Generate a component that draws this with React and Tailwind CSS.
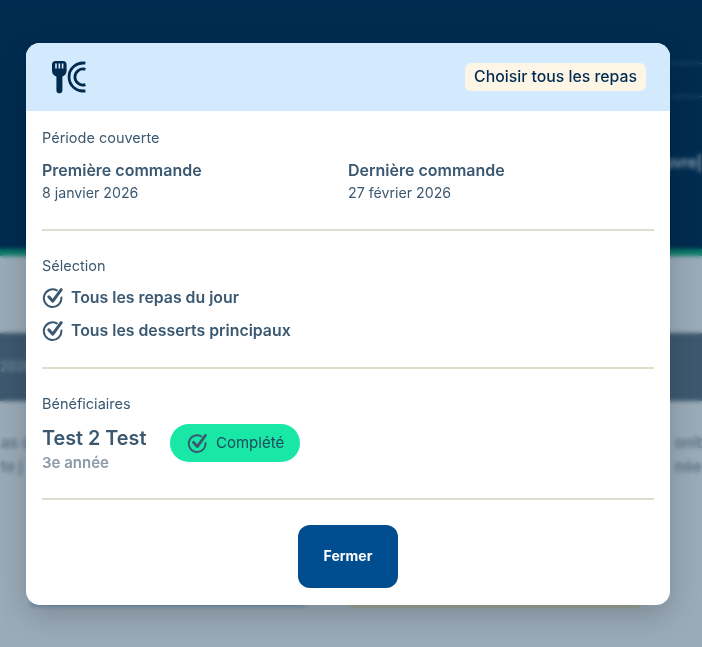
const font = { fontFamily: "Inter, 'Noto Sans', sans-serif" };

function CheckIcon({ className }) {
  return (
    <svg viewBox="0 0 22 22" fill="none" stroke="currentColor" strokeLinecap="round" strokeLinejoin="round" className={className}>
      <path d="M19.4 10.4a8.8 8.8 0 1 1-4.6-7" strokeWidth="2" />
      <path d="M6.8 9.8l4 4.4 8.4-11.6" strokeWidth="3" />
    </svg>
  );
}

function MealIcon() {
  return (
    <svg viewBox="0 0 36 34" className="w-[36px] h-[34px] text-[#012c50]" fill="none">
      <path
        fill="currentColor"
        d="M2 4.6C2 2.2 3.4 1 5.6 1H13C15.2 1 16.6 2.2 16.6 4.6V10.8C16.6 14 14.6 15.8 12.4 16.6V30.4C12.4 34.2 6.4 34.2 6.4 30.4V16.6C4 15.8 2 14 2 10.8Z"
      />
      <path d="M6 3.6V8.6M9.3 3.6V8.6M12.6 3.6V8.6" stroke="#d3e9fe" strokeWidth="1.6" />
      <path d="M35.4 3.2A14 14 0 1 0 35.4 30.8" stroke="currentColor" strokeWidth="2.8" />
      <path d="M35.4 9.4A8 8 0 1 0 35.4 24.6" stroke="currentColor" strokeWidth="2.8" />
    </svg>
  );
}

function Backdrop() {
  return (
    <div className="relative h-[647px] bg-[#9aabb8] overflow-hidden">
      <div className="h-[249px] bg-[#012c50] flex flex-col items-end pt-[63px]">
        <div className="w-[32px] h-px bg-[#3a5c7a]" />
        <div className="w-[32px] h-px bg-[#3a5c7a] mt-[32px]" />
        <p className="text-[15px] font-semibold text-[#8a9fb0] mt-[55px]">ouvre|</p>
      </div>
      <div className="h-[7px] bg-[#0a7a68]" />
      <div className="h-[77px]" />
      <div className="h-[68px] bg-[#3d586f] flex items-center">
        <span className="text-[13px] text-[#8a9fb0]">2026</span>
      </div>
      <div className="flex justify-between pt-[30px] text-[15px] font-semibold leading-[24px] text-[#5f7385]">
        <div className="pl-[1px]">
          <p>as d</p>
          <p>te j</p>
        </div>
        <div>
          <p>onit</p>
          <p>née</p>
        </div>
      </div>
      <div className="flex gap-[44px] pl-[31px] mt-[123px]">
        <div className="w-[275px] h-[4px] bg-[#5f86aa]" />
        <div className="w-[290px] h-[4px] bg-[#a39a62]" />
      </div>
      <div className="absolute inset-0 backdrop-blur-[2px]" />
    </div>
  );
}

export default function App() {
  return (
    <div className="relative h-[647px] w-[702px] overflow-hidden" style={font}>
      <Backdrop />

      <div className="absolute left-[26px] top-[43px] w-[644px] h-[562px] bg-white rounded-[14px] overflow-hidden shadow-[0_10px_30px_rgba(0,0,0,0.2)] flex flex-col">
        <header className="h-[68px] shrink-0 bg-[#d3e9fe] flex items-center justify-between px-[24px]">
          <MealIcon />
          <button className="h-[28px] w-[181px] rounded-[6px] bg-[#fdf5e6] text-[15.8px] font-medium text-[#012c50] whitespace-nowrap">
            Choisir tous les repas
          </button>
        </header>

        <div className="px-[16px] flex-1 flex flex-col text-[#3b5871]">
          <section className="h-[120px] border-b-2 border-[#e0dcce] pt-[18px]">
            <p className="text-[14.5px] leading-[18px]">Période couverte</p>
            <div className="grid grid-cols-2 mt-[13px]">
              <div>
                <p className="text-[16px] leading-[20px] font-semibold">Première commande</p>
                <p className="text-[14.2px] leading-[20px] mt-[3px]">8 janvier 2026</p>
              </div>
              <div>
                <p className="text-[16px] leading-[20px] font-semibold">Dernière commande</p>
                <p className="text-[14.2px] leading-[20px] mt-[3px]">27 février 2026</p>
              </div>
            </div>
          </section>

          <section className="h-[138px] border-b-2 border-[#e0dcce] pt-[26px]">
            <p className="text-[14.5px] leading-[18px]">Sélection</p>
            <div className="flex items-center gap-[7px] mt-[12px] h-[21px]">
              <CheckIcon className="w-[22px] h-[22px]" />
              <span className="text-[15.85px] font-semibold">Tous les repas du jour</span>
            </div>
            <div className="flex items-center gap-[7px] mt-[12px] h-[21px]">
              <CheckIcon className="w-[22px] h-[22px]" />
              <span className="text-[15.85px] font-semibold">Tous les desserts principaux</span>
            </div>
          </section>

          <section className="h-[131px] border-b-2 border-[#e0dcce] pt-[26px]">
            <p className="text-[14.5px] leading-[18px]">Bénéficiaires</p>
            <div className="flex items-start gap-[24px] mt-[11px]">
              <div className="pt-[2px] w-[104px]">
                <p className="text-[19.8px] leading-[24px] font-semibold whitespace-nowrap">Test 2 Test</p>
                <p className="text-[15px] leading-[20px] font-semibold text-[#8c9aa8] mt-[3px]">3e année</p>
              </div>
              <div className="h-[38px] w-[130px] flex items-center gap-[8px] pl-[17px] rounded-[19px] bg-[#18e7a6]">
                <CheckIcon className="w-[21px] h-[21px]" />
                <span className="text-[15px] text-[#1d4a5c]">Complété</span>
              </div>
            </div>
          </section>

          <div className="flex justify-center pt-[25px]">
            <button className="w-[100px] h-[63px] pb-[2px] rounded-[12px] bg-[#004d90] text-white text-[14px] font-bold">Fermer</button>
          </div>
        </div>
      </div>
    </div>
  );
}
